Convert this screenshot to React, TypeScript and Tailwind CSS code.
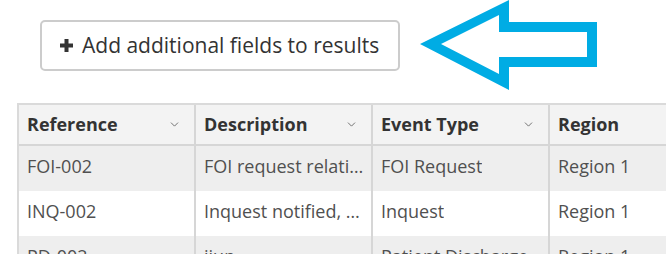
import { ChevronDown } from "lucide-react";

const columns = ["Reference", "Description", "Event Type", "Region"];

const rows = [
  ["FOI-002", "FOI request relating to records", "FOI Request", "Region 1"],
  ["INQ-002", "Inquest notified, awaiting date", "Inquest", "Region 1"],
  ["PD-002", "jjup", "Patient Discharge", "Region 1"],
];

function PlusIcon() {
  return (
    <svg width="13" height="13" viewBox="0 0 13 13" className="shrink-0">
      <rect x="4.5" y="0" width="4" height="13" fill="#333" />
      <rect x="0" y="4.5" width="13" height="4" fill="#333" />
    </svg>
  );
}

function Arrow() {
  return (
    <svg width="180" height="92" viewBox="416 0 180 92" className="shrink-0">
      <path
        fillRule="evenodd"
        fill="#00ace4"
        d="M418 44 L507 0 L507 22 L595 22 L595 67 L507 67 L507 90 Z M439 44 L497 15 L497 32 L585 32 L585 57 L497 57 L497 74 Z"
      />
    </svg>
  );
}

export default function App() {
  return (
    <div
      className="h-[254px] w-[666px] overflow-hidden bg-white"
      style={{ fontFamily: '"Open Sans", sans-serif' }}
    >
      <div className="flex items-start h-[103px]">
        <button className="ml-[40px] mt-[20px] flex h-[51px] w-[360px] items-center gap-[9px] rounded-[5px] border-2 border-[#cccccc] bg-white pl-[18px] text-[21px] text-[#333333]">
          <PlusIcon />
          <span>Add additional fields to results</span>
        </button>
        <div className="ml-[18px]">
          <Arrow />
        </div>
      </div>

      <div className="ml-[17px] w-[700px] border-l-2 border-t-2 border-[#dadada]">
        <div className="flex h-[41px] border-b-2 border-[#d6d6d6] bg-[#f3f3f3]">
          {columns.map((c, i) => (
            <div
              key={c}
              className="flex w-[177px] shrink-0 items-center justify-between border-r-2 border-[#d6d6d6] pl-[8px] pr-[13px] text-[18px] font-bold text-[#333333]"
            >
              <span>{c}</span>
              {i < 3 && <ChevronDown size={13} strokeWidth={1.5} color="#555" />}
            </div>
          ))}
        </div>
        {rows.map((r, ri) => (
          <div
            key={ri}
            className={
              "flex h-[45px] " + (ri % 2 === 0 ? "bg-[#eeeeee]" : "bg-white")
            }
          >
            {r.map((v, ci) => (
              <div
                key={ci}
                className="flex w-[177px] shrink-0 items-center border-r-2 border-[#d6d6d6] pl-[8px] pr-[3px] pb-[4px] text-[18px] text-[#505050]"
              >
                <span className="truncate">{v}</span>
              </div>
            ))}
          </div>
        ))}
      </div>
    </div>
  );
}
